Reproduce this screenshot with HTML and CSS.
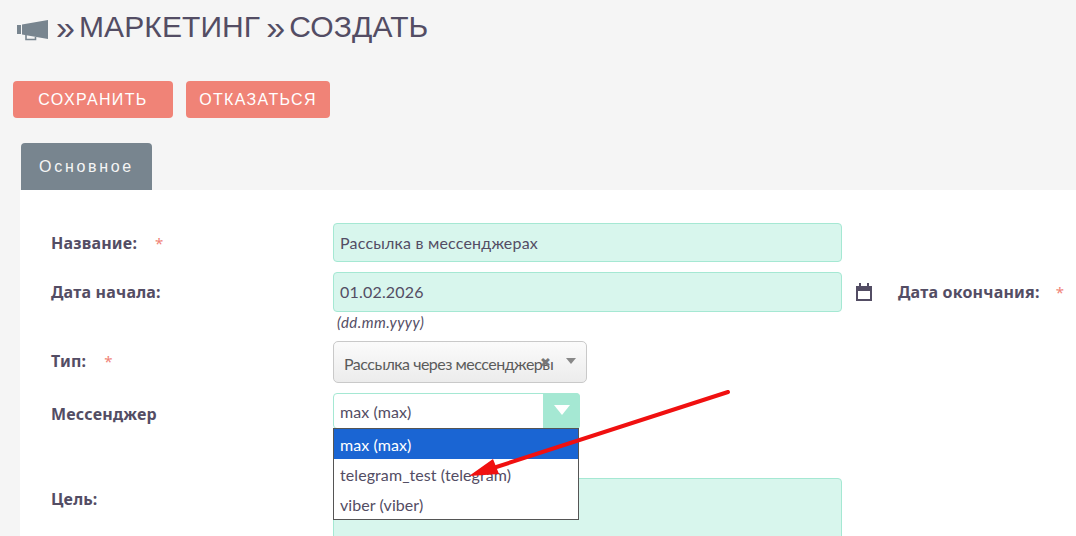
FILE: index.html
```html
<!DOCTYPE html>
<html lang="ru">
<head>
<meta charset="utf-8">
<title>Маркетинг</title>
<link rel="stylesheet" href="styles.css">
</head>
<body>
<h1 class="title">
  <svg class="megaphone" width="32" height="22" viewBox="0 0 32 22"><path fill="#78858f" d="M0 6h4v9H0zM5 5.500 31 1v19L5 15.500z"/><path fill="none" stroke="#78858f" stroke-width="1.6" d="M9 16v4.500h9.500V18"/></svg>
  <span class="crumb">»</span><span>МАРКЕТИНГ</span><span class="crumb crumb-2">»</span><span>СОЗДАТЬ</span>
</h1>
<div class="actions">
  <button class="btn btn-save">СОХРАНИТЬ</button>
  <button class="btn btn-cancel">ОТКАЗАТЬСЯ</button>
</div>
<div class="tab">Основное</div>
<main class="panel">
  <div class="row row-name">
    <label class="label">Название:<span class="req">*</span></label>
    <div class="input">Рассылка в мессенджерах</div>
  </div>
  <div class="row row-date">
    <label class="label">Дата начала:</label>
    <div class="input input-date">01.02.2026</div>
    <svg class="cal" width="16" height="18" viewBox="0 0 16 18"><path fill="#534d64" fill-rule="evenodd" d="M3 0h2v3h6V0h2v3h3v15H0V3h3zM2 8v8h12V8z"/></svg>
    <label class="label label-end">Дата окончания:<span class="req">*</span></label>
  </div>
  <div class="hint">(dd.mm.yyyy)</div>
  <div class="row row-type">
    <label class="label label-type">Тип:<span class="req">*</span></label>
    <div class="select">
      <span class="select-text">Рассылка через мессенджеры</span>
      <span class="select-x">✖</span>
      <span class="select-caret"></span>
    </div>
  </div>
  <div class="row row-msg">
    <label class="label">Мессенджер</label>
    <div class="combo">
      <span class="combo-value">max (max)</span>
      <span class="combo-btn"><span class="combo-caret"></span></span>
      <ul class="list">
        <li class="opt opt-active">max (max)</li>
        <li class="opt">telegram_test (telegram)</li>
        <li class="opt">viber (viber)</li>
      </ul>
    </div>
  </div>
  <div class="row row-goal">
    <label class="label">Цель:</label>
    <div class="textarea"></div>
  </div>
</main>
<svg class="arrow" width="270" height="90" viewBox="0 0 270 90"><path fill="none" stroke="#f01010" stroke-width="4" stroke-linecap="round" d="M261 2 20 80"/><path fill="#f01010" d="M2 86 26 69 32 84z"/></svg>
</body>
</html>
```

FILE: styles.css
```css
html, body {
  margin: 0;
  height: 536px;
  overflow: hidden;
}
body {
  background: #f5f5f5;
  font-family: Lato, "Noto Sans", sans-serif;
  color: #534d64;
  position: relative;
}
.title {
  display: flex;
  align-items: center;
  margin: 0;
  height: 54px;
  padding-left: 16px;
  font: 400 30px/54px "Liberation Sans", sans-serif;
  letter-spacing: 0.1px;
  color: #534d64;
}
.megaphone { margin: 6px 7px 0 1px; }
.crumb { margin-right: 4px; font-size: 34px; line-height: 50px; }
.crumb-2 { margin-left: 6px; margin-right: 4px; }
.actions {
  display: flex;
  gap: 13px;
  padding: 27px 0 0 13px;
}
.btn {
  height: 37px;
  border: 0;
  border-radius: 4px;
  background: #f08377;
  color: #fff;
  font: 400 16px "Liberation Sans", sans-serif;
  letter-spacing: 1.35px;
  padding: 0;
}
.btn-save { width: 160px; }
.btn-cancel { width: 144px; }
.tab {
  width: 131px;
  height: 47px;
  margin: 25px 0 0 21px;
  background: #78858f;
  border-radius: 4px 4px 0 0;
  color: #f5f5f5;
  font: 400 16px/48px "Liberation Sans", sans-serif;
  letter-spacing: 2.7px;
  text-align: center;
}
.panel {
  margin-left: 20px;
  background: #fff;
  height: 346px;
  padding-top: 33px;
  box-sizing: border-box;
}
.row {
  display: flex;
  align-items: center;
}
.label {
  display: block;
  width: 313px;
  padding-left: 31px;
  box-sizing: border-box;
  font: 700 16px "Noto Sans", sans-serif;
  letter-spacing: 0.2px;
  flex: none;
}
.req {
  color: #f08377;
  font-weight: 400;
  margin-left: 18px;
  font-size: 15px;
}
.input {
  width: 509px;
  height: 39px;
  box-sizing: border-box;
  background: #d8f6ed;
  border: 1px solid #a5e8d3;
  border-radius: 4px;
  padding-left: 6px;
  font: 400 16px/37px Lato, "Noto Sans", sans-serif;
  letter-spacing: 0.2px;
  color: #534d64;
  flex: none;
}
.row-date { margin-top: 10px; }
.input-date { height: 40px; line-height: 38px; }
.cal { margin-left: 14px; flex: none; }
.label-end {
  width: auto;
  padding-left: 26px;
  white-space: nowrap;
}
.label-end .req { margin-left: 16px; }
.hint {
  margin: 1px 0 0 317px;
  font: italic 400 15px/18px Lato, "Noto Sans", sans-serif;
  letter-spacing: 0.45px;
}
.row-type { margin-top: 10px; }
.label-type { padding-bottom: 3px; }
.select {
  position: relative;
  width: 254px;
  height: 42px;
  box-sizing: border-box;
  border: 1px solid #c9c9c9;
  border-radius: 5px;
  background: linear-gradient(#fbfbfb, #ececec);
  font: 400 16px/43px Lato, "Noto Sans", sans-serif;
  letter-spacing: -0.5px;
  color: #5b5b5b;
  padding-left: 10px;
  white-space: nowrap;
}
.select-text { display: block; width: 209px; }
.select-x {
  position: absolute;
  left: 206px;
  top: -1px;
  font-size: 13px;
  letter-spacing: 0;
  color: #777;
}
.select-caret {
  position: absolute;
  left: 232px;
  top: 16px;
  border: 5px solid transparent;
  border-top: 6px solid #888;
  border-bottom: 0;
}
.row-msg { margin-top: 10px; align-items: flex-start; }
.row-msg .label { line-height: 42px; height: 36px; }
.combo {
  position: relative;
  width: 247px;
  height: 36px;
  box-sizing: border-box;
  background: #fff;
  border: 1px solid #a5e8d3;
  border-radius: 4px;
  font: 400 16px/36px Lato, "Noto Sans", sans-serif;
  letter-spacing: 0.08px;
  color: #534d64;
  padding-left: 6px;
}
.combo-btn {
  position: absolute;
  right: -1px;
  top: -1px;
  width: 37px;
  height: 36px;
  background: #a5e8d3;
  border-radius: 0 4px 4px 0;
}
.combo-caret {
  position: absolute;
  left: 11px;
  top: 12px;
  border: 8px solid transparent;
  border-top: 10px solid #fff;
  border-bottom: 0;
}
.list {
  position: absolute;
  z-index: 2;
  left: -1px;
  top: 34px;
  width: 246px;
  box-sizing: border-box;
  margin: 0;
  padding: 0;
  list-style: none;
  background: #fff;
  border: 1px solid #555;
  font-size: 16px;
  line-height: 32px;
}
.opt { padding-left: 6px; height: 30px; }
.opt-active { background: #1a65d3; color: #fff; }
.row-goal { margin-top: 49px; align-items: flex-start; }
.row-goal .label { line-height: 42px; }
.textarea {
  width: 509px;
  height: 100px;
  box-sizing: border-box;
  background: #d8f6ed;
  border: 1px solid #a5e8d3;
  border-radius: 4px;
}
.arrow {
  position: absolute;
  left: 467px;
  top: 390px;
  z-index: 3;
}
```
